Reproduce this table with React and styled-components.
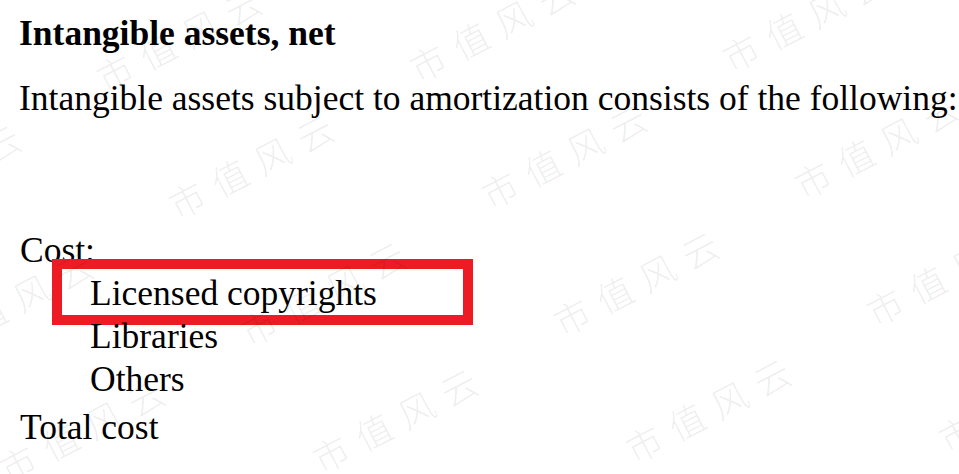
import React from "react";
import styled, { createGlobalStyle } from "styled-components";

const GlobalStyle = createGlobalStyle`
  html, body { margin: 0; padding: 0; background: #ffffff; }
  #root { width: 959px; height: 474px; }
`;

const Page = styled.div`
  position: relative;
  width: 959px;
  height: 474px;
  box-sizing: border-box;
  overflow: hidden;
  padding: 11.5px 0 0 19px;
  background: #ffffff;
  color: #000000;
  font-family: "Liberation Serif", "Times New Roman", serif;
  font-size: 35.5px;
  white-space: nowrap;
`;

const Heading = styled.div`
  font-weight: bold;
  line-height: 43px;
`;

const Intro = styled.div`
  margin-top: 22px;
  line-height: 43px;
`;

const Table = styled.div`
  margin-top: 109px;
  display: flex;
  flex-direction: column;
`;

const Row = styled.div`
  position: relative;
  line-height: 43px;
  padding-left: ${(p) => (p.$indent ? "71px" : "1px")};
  margin-top: ${(p) => (p.$total ? "5px" : "0")};
`;

const Highlight = styled.div`
  position: absolute;
  left: 33px;
  top: -12.5px;
  width: 421px;
  height: 66px;
  box-sizing: border-box;
  border: 10px solid #ed1c24;
  pointer-events: none;
`;

const WatermarkLayer = styled.div`
  position: absolute;
  inset: 0;
  pointer-events: none;
  z-index: 2;
`;

const Mark = styled.span`
  position: absolute;
  transform: translate(-50%, -50%) rotate(-27.5deg);
  font-family: "Noto Sans CJK SC", sans-serif;
  font-weight: 300;
  font-size: 36px;
  line-height: 1;
  letter-spacing: 12px;
  padding-left: 12px;
  color: rgba(0, 0, 0, 0.08);
  white-space: nowrap;
`;

const marks = [];
for (let m = -4; m <= 4; m++) {
  for (let n = -4; n <= 4; n++) {
    const x = 635 + 313 * m + 72 * n;
    const y = 282 - 10 * m + 127 * n;
    if (x > -160 && x < 1120 && y > -70 && y < 550) marks.push({ x, y, k: `${m}_${n}` });
  }
}

export default function App() {
  return (
    <>
      <GlobalStyle />
      <Page>
        <Heading>Intangible assets, net</Heading>
        <Intro>Intangible assets subject to amortization consists of the following:</Intro>
        <Table>
          <Row>Cost:</Row>
          <Row $indent>
            Licensed copyrights
            <Highlight />
          </Row>
          <Row $indent>Libraries</Row>
          <Row $indent>Others</Row>
          <Row $total>Total cost</Row>
        </Table>
        <WatermarkLayer>
          {marks.map((p) => (
            <Mark key={p.k} style={{ left: p.x, top: p.y }}>
              市值风云
            </Mark>
          ))}
        </WatermarkLayer>
      </Page>
    </>
  );
}
